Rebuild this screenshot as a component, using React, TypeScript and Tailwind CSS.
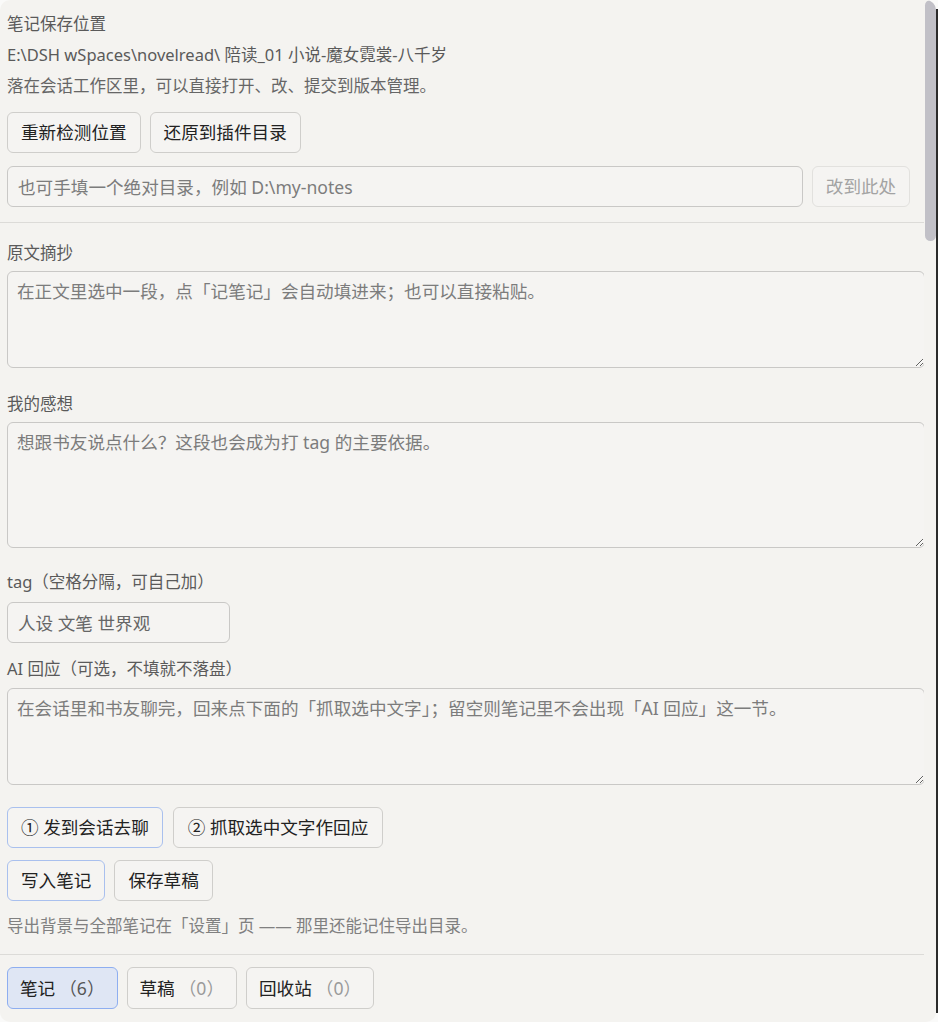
import React from "react";

const btn =
  "h-[41px] rounded-[6px] border bg-[#f5f4f2] px-[13px] text-[17.6px] text-[#222] leading-none";
const label = "text-[16.5px] leading-[26px] text-[#5a5a5a]";
const area =
  "block w-[918px] rounded-[6px] border border-[#c9c8c6] bg-[#f5f4f2] px-[9px] pt-[6px] text-[17.6px] leading-[26px] text-[#333] outline-none placeholder:text-[#7c7c7c]";

function Tab({ name, count, active }: { name: string; count: number; active?: boolean }) {
  return (
    <button
      className={
        active
          ? "flex h-[42px] items-center rounded-[6px] border border-[#8eaef0] bg-[#dfe6f4] px-[12px] text-[17.6px] text-[#222]"
          : "flex h-[42px] items-center rounded-[6px] border border-[#cfcecb] bg-[#f5f4f2] px-[12px] text-[17.6px] text-[#222]"
      }
    >
      <span>{name}</span>
      <span className={active ? "ml-[4px] text-[#555]" : "ml-[4px] text-[#9a9a9a]"}>（{count}）</span>
    </button>
  );
}

export default function App() {
  return (
    <div className="flex h-[1022px] w-[938px] overflow-hidden bg-[#fafaf9] font-['Noto_Sans','Noto_Sans_CJK_SC',sans-serif]">
      <div className="flex h-full w-[936px] overflow-hidden rounded-[10px] bg-[#f4f3f0]">
        <div className="h-full w-[924px] overflow-hidden">
          {/* save location */}
          <div className="px-[7px] pt-[8px]">
            <div className="text-[16.5px] leading-[31px] text-[#5a5a5a]">笔记保存位置</div>
            <div className="text-[16.5px] leading-[31px] text-[#5a5a5a]">
              {"E:\\DSH wSpaces\\novelread\\ 陪读_01 小说-魔女霓裳-八千岁"}
            </div>
            <div className="text-[16.5px] leading-[31px] text-[#666]">
              落在会话工作区里，可以直接打开、改、提交到版本管理。
            </div>
            <div className="mt-[11px] flex gap-[9px]">
              <button className={btn + " border-[#cfcecb]"}>重新检测位置</button>
              <button className={btn + " border-[#cfcecb]"}>还原到插件目录</button>
            </div>
            <div className="mt-[13px] flex gap-[9px]">
              <input
                className="h-[41px] w-[796px] rounded-[6px] border border-[#c9c8c6] bg-[#f5f4f2] px-[10px] text-[17.6px] outline-none placeholder:text-[#7c7c7c]"
                placeholder="也可手填一个绝对目录，例如 D:\my-notes"
              />
              <button className="h-[41px] w-[98px] rounded-[6px] border border-[#e2e1de] bg-[#f5f4f2] text-[17.6px] text-[#a3a3a3]">
                改到此处
              </button>
            </div>
          </div>

          <div className="mt-[15px] h-px bg-[#dcdbd8]" />

          {/* note form */}
          <div className="px-[7px]">
            <div className={label + " mt-[17px]"}>原文摘抄</div>
            <textarea
              className={area + " mt-[5px] h-[97px]"}
              placeholder="在正文里选中一段，点「记笔记」会自动填进来；也可以直接粘贴。"
            />
            <div className={label + " mt-[23px]"}>我的感想</div>
            <textarea
              className={area + " mt-[5px] h-[126px]"}
              placeholder="想跟书友说点什么？这段也会成为打 tag 的主要依据。"
            />
            <div className={label + " mt-[21px]"}>tag（空格分隔，可自己加）</div>
            <input
              className="mt-[7px] block h-[41px] w-[223px] rounded-[6px] border border-[#c9c8c6] bg-[#f5f4f2] px-[10px] text-[17.6px] outline-none placeholder:text-[#666]"
              placeholder="人设 文笔 世界观"
            />
            <div className={label + " mt-[13px]"}>AI 回应（可选，不填就不落盘）</div>
            <textarea
              className={area + " mt-[6px] h-[97px]"}
              placeholder="在会话里和书友聊完，回来点下面的「抓取选中文字」；留空则笔记里不会出现「AI 回应」这一节。"
            />
            <div className="mt-[22px] flex gap-[10px]">
              <button className={btn + " border-[#a9c0ee]"}>① 发到会话去聊</button>
              <button className={btn + " border-[#cfcecb] px-[14px]"}>② 抓取选中文字作回应</button>
            </div>
            <div className="mt-[12px] flex gap-[9px]">
              <button className={btn + " border-[#a9c0ee]"}>写入笔记</button>
              <button className={btn + " border-[#cfcecb]"}>保存草稿</button>
            </div>
            <div className="mt-[12px] text-[16.5px] leading-[26px] text-[#808080]">
              导出背景与全部笔记在「设置」页 —— 那里还能记住导出目录。
            </div>
          </div>

          <div className="mt-[15px] h-px bg-[#dcdbd8]" />

          {/* list tabs */}
          <div className="mt-[12px] flex gap-[9px] px-[7px]">
            <Tab name="笔记" count={6} active />
            <Tab name="草稿" count={0} />
            <Tab name="回收站" count={0} />
          </div>
        </div>

        {/* scrollbar */}
        <div className="h-full w-[12px]">
          <div className="ml-[1px] h-[241px] w-[11px] rounded-[6px] bg-[#c1c0c7]" />
        </div>
      </div>
      <div className="my-[9px] w-[2px] bg-[#2b2b2b]" />
    </div>
  );
}
